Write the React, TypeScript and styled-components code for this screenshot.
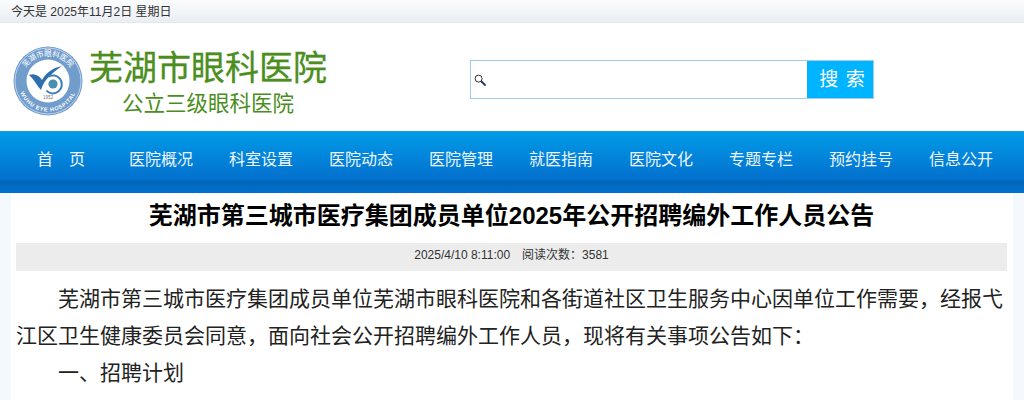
import styled, { createGlobalStyle } from "styled-components";

const navItems = ["首　页", "医院概况", "科室设置", "医院动态", "医院管理", "就医指南", "医院文化", "专题专栏", "预约挂号", "信息公开"];

const GlobalStyle = createGlobalStyle`
  html, body {
    margin: 0;
    padding: 0;
    height: 400px;
    overflow: hidden;
    background: #fff;
    font-family: "Liberation Sans", Arial, "Noto Sans CJK SC", sans-serif;
  }
`;

function Logo() {
  return (
    <svg width="70" height="70" viewBox="0 0 70 70">
      <circle cx="35" cy="35" r="34.5" fill="#719dcd" />
      <circle cx="35" cy="35" r="33" fill="none" stroke="#dfe9f5" strokeWidth="0.7" />
      <circle cx="35" cy="35" r="21.5" fill="#fff" />
      <path id="logoTop" d="M8 37 A27 27 0 0 1 62 37" fill="none" />
      <path id="logoBottom" d="M5.5 36 A29.5 29.5 0 0 0 64.5 36" fill="none" />
      <text fontSize="7.5" fill="#fff" fontFamily="Noto Sans CJK SC">
        <textPath href="#logoTop" startOffset="50%" textAnchor="middle">芜湖市眼科医院</textPath>
      </text>
      <text fontSize="5.5" fill="#fff" fontWeight="bold" fontFamily="Liberation Sans" letterSpacing="0.7">
        <textPath href="#logoBottom" startOffset="50%" textAnchor="middle">WUHU EYE HOSPITAL</textPath>
      </text>
      <path d="M16 29 C21 27 26 29 29 34 C33 27 39 22 49 20 C42 25 37 29 33 34 C30 38 29 41 28 44 C24 40 21 33 16 29 Z" fill="#2f6fae" />
      <path d="M31.5 42 A9 9 0 1 0 38 29.5" fill="none" stroke="#3f7fb8" strokeWidth="2" transform="rotate(-20 40 38)" />
      <circle cx="40" cy="38" r="4.6" fill="#4a8fae" />
      <text x="35" y="53" fontSize="4.5" fill="#777" textAnchor="middle" fontFamily="Liberation Sans">1952</text>
    </svg>
  );
}

function SearchIcon() {
  return (
    <svg width="12" height="12" viewBox="0 0 12 12">
      <circle cx="4.6" cy="4.6" r="3.5" fill="#fff" stroke="#333" strokeWidth="1" />
      <path d="M7.5 7.5 L11 11" stroke="#2c3560" strokeWidth="1.8" strokeLinecap="round" />
    </svg>
  );
}

export default function App() {
  return (
    <Page>
      <GlobalStyle />
      <TopBar>今天是 2025年11月2日 星期日</TopBar>
      <Header>
        <Brand>
          <Logo />
          <BrandText>
            <BrandName>芜湖市眼科医院</BrandName>
            <BrandSub>公立三级眼科医院</BrandSub>
          </BrandText>
        </Brand>
        <SearchBox>
          <SearchField>
            <SearchIcon />
          </SearchField>
          <SearchButton>搜 索</SearchButton>
        </SearchBox>
      </Header>
      <Nav>
        {navItems.map((item) => (
          <NavItem key={item}>{item}</NavItem>
        ))}
      </Nav>
      <Main>
        <Article>
          <Title>芜湖市第三城市医疗集团成员单位2025年公开招聘编外工作人员公告</Title>
          <Meta>2025/4/10 8:11:00　阅读次数：3581</Meta>
          <Body>
            <Paragraph>芜湖市第三城市医疗集团成员单位芜湖市眼科医院和各街道社区卫生服务中心因单位工作需要，经报弋江区卫生健康委员会同意，面向社会公开招聘编外工作人员，现将有关事项公告如下：</Paragraph>
            <Paragraph>一、招聘计划</Paragraph>
            <LastParagraph>本次公开招聘编外工作人员共计若干名，其中芜湖市眼科医院若干名，各街道社区卫生服务中心若干名。</LastParagraph>
          </Body>
        </Article>
      </Main>
    </Page>
  );
}

const Page = styled.div`
  width: 1024px;
  height: 400px;
  overflow: hidden;
`;

const TopBar = styled.div`
  height: 23px;
  box-sizing: border-box;
  padding-left: 11px;
  font-size: 12px;
  line-height: 24px;
  color: #333;
  background: linear-gradient(#fbfcfd, #e9eef3);
  border-bottom: 1px solid #e4e8ec;
`;

const Header = styled.div`
  height: 108px;
  display: flex;
  align-items: flex-start;
  background: #fff;
`;

const Brand = styled.div`
  width: 470px;
  padding: 23px 0 0 13px;
  box-sizing: border-box;
  display: flex;
  gap: 5px;
`;

const BrandText = styled.div`
  width: 240px;
  text-align: center;
`;

const BrandName = styled.div`
  font-size: 34px;
  line-height: 44px;
  color: #4b8e1d;
  white-space: nowrap;
  -webkit-text-stroke: 0.3px #4b8e1d;
`;

const BrandSub = styled.div`
  font-size: 21.5px;
  line-height: 28px;
  color: #4b8e1d;
  white-space: nowrap;
`;

const SearchBox = styled.div`
  margin-top: 37px;
  width: 404px;
  height: 39px;
  box-sizing: border-box;
  display: flex;
  border: 1px solid #a3cbec;
`;

const SearchField = styled.div`
  flex: 1;
  display: flex;
  align-items: center;
  padding-left: 3px;
`;

const SearchButton = styled.div`
  width: 66px;
  box-sizing: border-box;
  padding-left: 5px;
  background: #00b4ff;
  color: #fff;
  font-size: 19px;
  line-height: 37px;
  letter-spacing: 1px;
  text-align: center;
`;

const Nav = styled.div`
  height: 62px;
  box-sizing: border-box;
  padding-left: 11px;
  display: flex;
  border-top: 1px solid #1a9ad6;
  background: linear-gradient(#029be8 0%, #0270cd 78%, #0266b8 80%, #0270d0 100%);
`;

const NavItem = styled.div`
  width: 100px;
  text-align: center;
  color: #eef7ff;
  font-size: 16px;
  line-height: 56px;
  white-space: pre;
`;

const Main = styled.div`
  padding: 0 11px;
  background: #f3f9fe;
  height: 207px;
`;

const Article = styled.div`
  height: 100%;
  padding: 0 6px 0 5px;
  background: #fff;
  overflow: hidden;
`;

const Title = styled.h1`
  margin: 0;
  font-size: 24px;
  line-height: 46px;
  font-weight: bold;
  text-align: center;
  color: #000;
  white-space: nowrap;
`;

const Meta = styled.div`
  margin-top: 4px;
  height: 28px;
  line-height: 24px;
  font-size: 12px;
  text-align: center;
  color: #333;
  background: #ececec;
`;

const Body = styled.div`
  padding-top: 9px;
`;

const Paragraph = styled.p`
  margin: 0;
  font-size: 21px;
  line-height: 37px;
  text-indent: 2em;
  color: #222;
`;

const LastParagraph = styled(Paragraph)`
  margin-top: 1px;
`;
